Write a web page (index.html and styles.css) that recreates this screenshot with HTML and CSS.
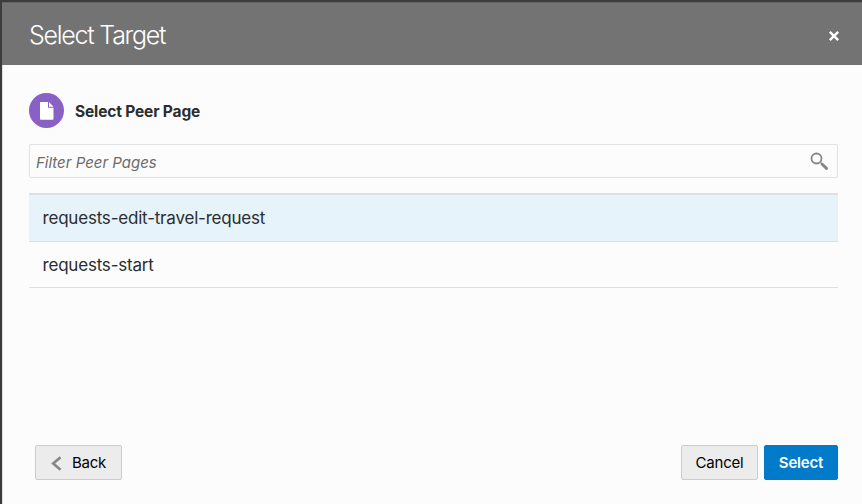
FILE: index.html
```html
<!DOCTYPE html>
<html lang="en">
<head>
<meta charset="utf-8">
<title>Select Target</title>
<link rel="stylesheet" href="styles.css">
</head>
<body>
<main class="dialog">
  <header class="dialog-header">
    <h1 class="title">Select Target</h1>
    <button class="close" aria-label="Close">
      <svg width="12" height="12" viewBox="0 0 12 12"><path d="M1.8 1.8 10.2 10.2M10.2 1.8 1.8 10.2" stroke="#fff" stroke-width="2.5" fill="none"/></svg>
    </button>
  </header>
  <section class="content">
    <div class="heading">
      <span class="page-icon">
        <svg width="14" height="18" viewBox="0 0 14 18"><path d="M.8 0H8v5.7h5.5v11.1a1 1 0 0 1-1 1H1a1 1 0 0 1-1-1V.8A.8.8 0 0 1 .8 0ZM9 0l4.5 4.7H9Z" fill="#fff"/></svg>
      </span>
      <h2 class="heading-text">Select Peer Page</h2>
    </div>
    <div class="filter">
      <input class="filter-input" type="text" placeholder="Filter Peer Pages">
      <svg width="19" height="19" viewBox="0 0 19 19" fill="none" stroke="#858789"><circle cx="6.5" cy="6.5" r="5" stroke-width="1.8"/><path d="m10.8 10.8 1.4 1.4" stroke-width="1.4"/><path d="m12.2 12.2 4.3 4.2" stroke-width="3" stroke-linecap="round"/></svg>
    </div>
    <ul class="pages">
      <li class="page selected"><span class="page-name">requests-edit-travel-request</span></li>
      <li class="page"><span class="page-name">requests-start</span></li>
    </ul>
  </section>
  <footer class="actions">
    <button class="button back"><svg width="11" height="15" viewBox="0 0 11 15"><path d="M9.5 1.2 2.2 7.5l7.3 6.3" fill="none" stroke="#858789" stroke-width="2.7"/></svg><span>Back</span></button>
    <button class="button cancel"><span>Cancel</span></button>
    <button class="button select"><span>Select</span></button>
  </footer>
</main>
</body>
</html>
```
FILE: styles.css
```css
* { box-sizing: border-box; }
body {
  margin: 0;
  height: 504px;
  overflow: hidden;
  padding: 2px 0 0 2px;
  background: #3b3c3e;
  font-family: Inter, "Liberation Sans", sans-serif;
  color: #2b2d2f;
}
.dialog {
  height: 502px;
  display: flex;
  flex-direction: column;
  background: #fcfcfc;
  border-left: 1px solid #dedede;
}
.dialog-header {
  height: 63px;
  margin-left: -1px;
  padding: 0 22px 0 27px;
  display: flex;
  align-items: center;
  justify-content: space-between;
  background: #737373;
  border-top: 1px solid #666;
}
.title {
  margin: 2px 0 0;
  font-size: 25px;
  line-height: 30px;
  font-weight: 300;
  letter-spacing: -1.25px;
  color: #fff;
}
.close {
  display: flex;
  padding: 0;
  margin-top: 4px;
  border: 0;
  background: none;
}
.content { padding: 28px 24px 0 26px; }
.heading { display: flex; align-items: center; gap: 11px; height: 35px; }
.page-icon {
  width: 35px;
  height: 35px;
  display: flex;
  align-items: center;
  justify-content: center;
  border-radius: 50%;
  background: #8860c6;
}
.heading-text { margin: 2px 0 0; font-size: 15.5px; line-height: 20px; font-weight: 700; letter-spacing: -.15px; }
.filter {
  height: 34px;
  margin-top: 16px;
  padding: 0 8px 0 6px;
  display: flex;
  align-items: center;
  border: 1px solid #e2e2e2;
  border-radius: 2px;
}
.filter-input {
  flex: 1;
  min-width: 0;
  padding: 4px 0 0;
  border: 0;
  outline: 0;
  background: none;
  font: italic 15px/20px Inter, "Liberation Sans", sans-serif;
  letter-spacing: 0;
}
.filter-input::placeholder { color: #6b6b6b; }
.pages { margin: 15px 0 0; padding: 0; list-style: none; border-top: 2px solid #dedfe0; }
.page {
  height: 46.5px;
  padding: 1px 0 0 13.5px;
  display: flex;
  align-items: center;
  border-bottom: 1px solid #dedfe0;
  font-size: 17px;
  letter-spacing: -.2px;
}
.selected { background: #e7f3fa; }
.actions {
  margin-top: auto;
  padding: 0 24px 24px 32px;
  display: flex;
  gap: 6px;
}
.button {
  height: 35px;
  padding: 1px 0 0;
  display: flex;
  align-items: center;
  justify-content: center;
  border: 1px solid #cacccd;
  border-radius: 2px;
  background: #ececec;
  color: #000;
  font: 15px/20px Inter, "Liberation Sans", sans-serif;
  letter-spacing: -.2px;
}
.back { width: 87px; gap: 10px; margin-right: auto; }
.cancel { width: 77px; }
.select { width: 74px; border-color: #007ac9; background: #007ac9; color: #fff; font-weight: 600; }
```
